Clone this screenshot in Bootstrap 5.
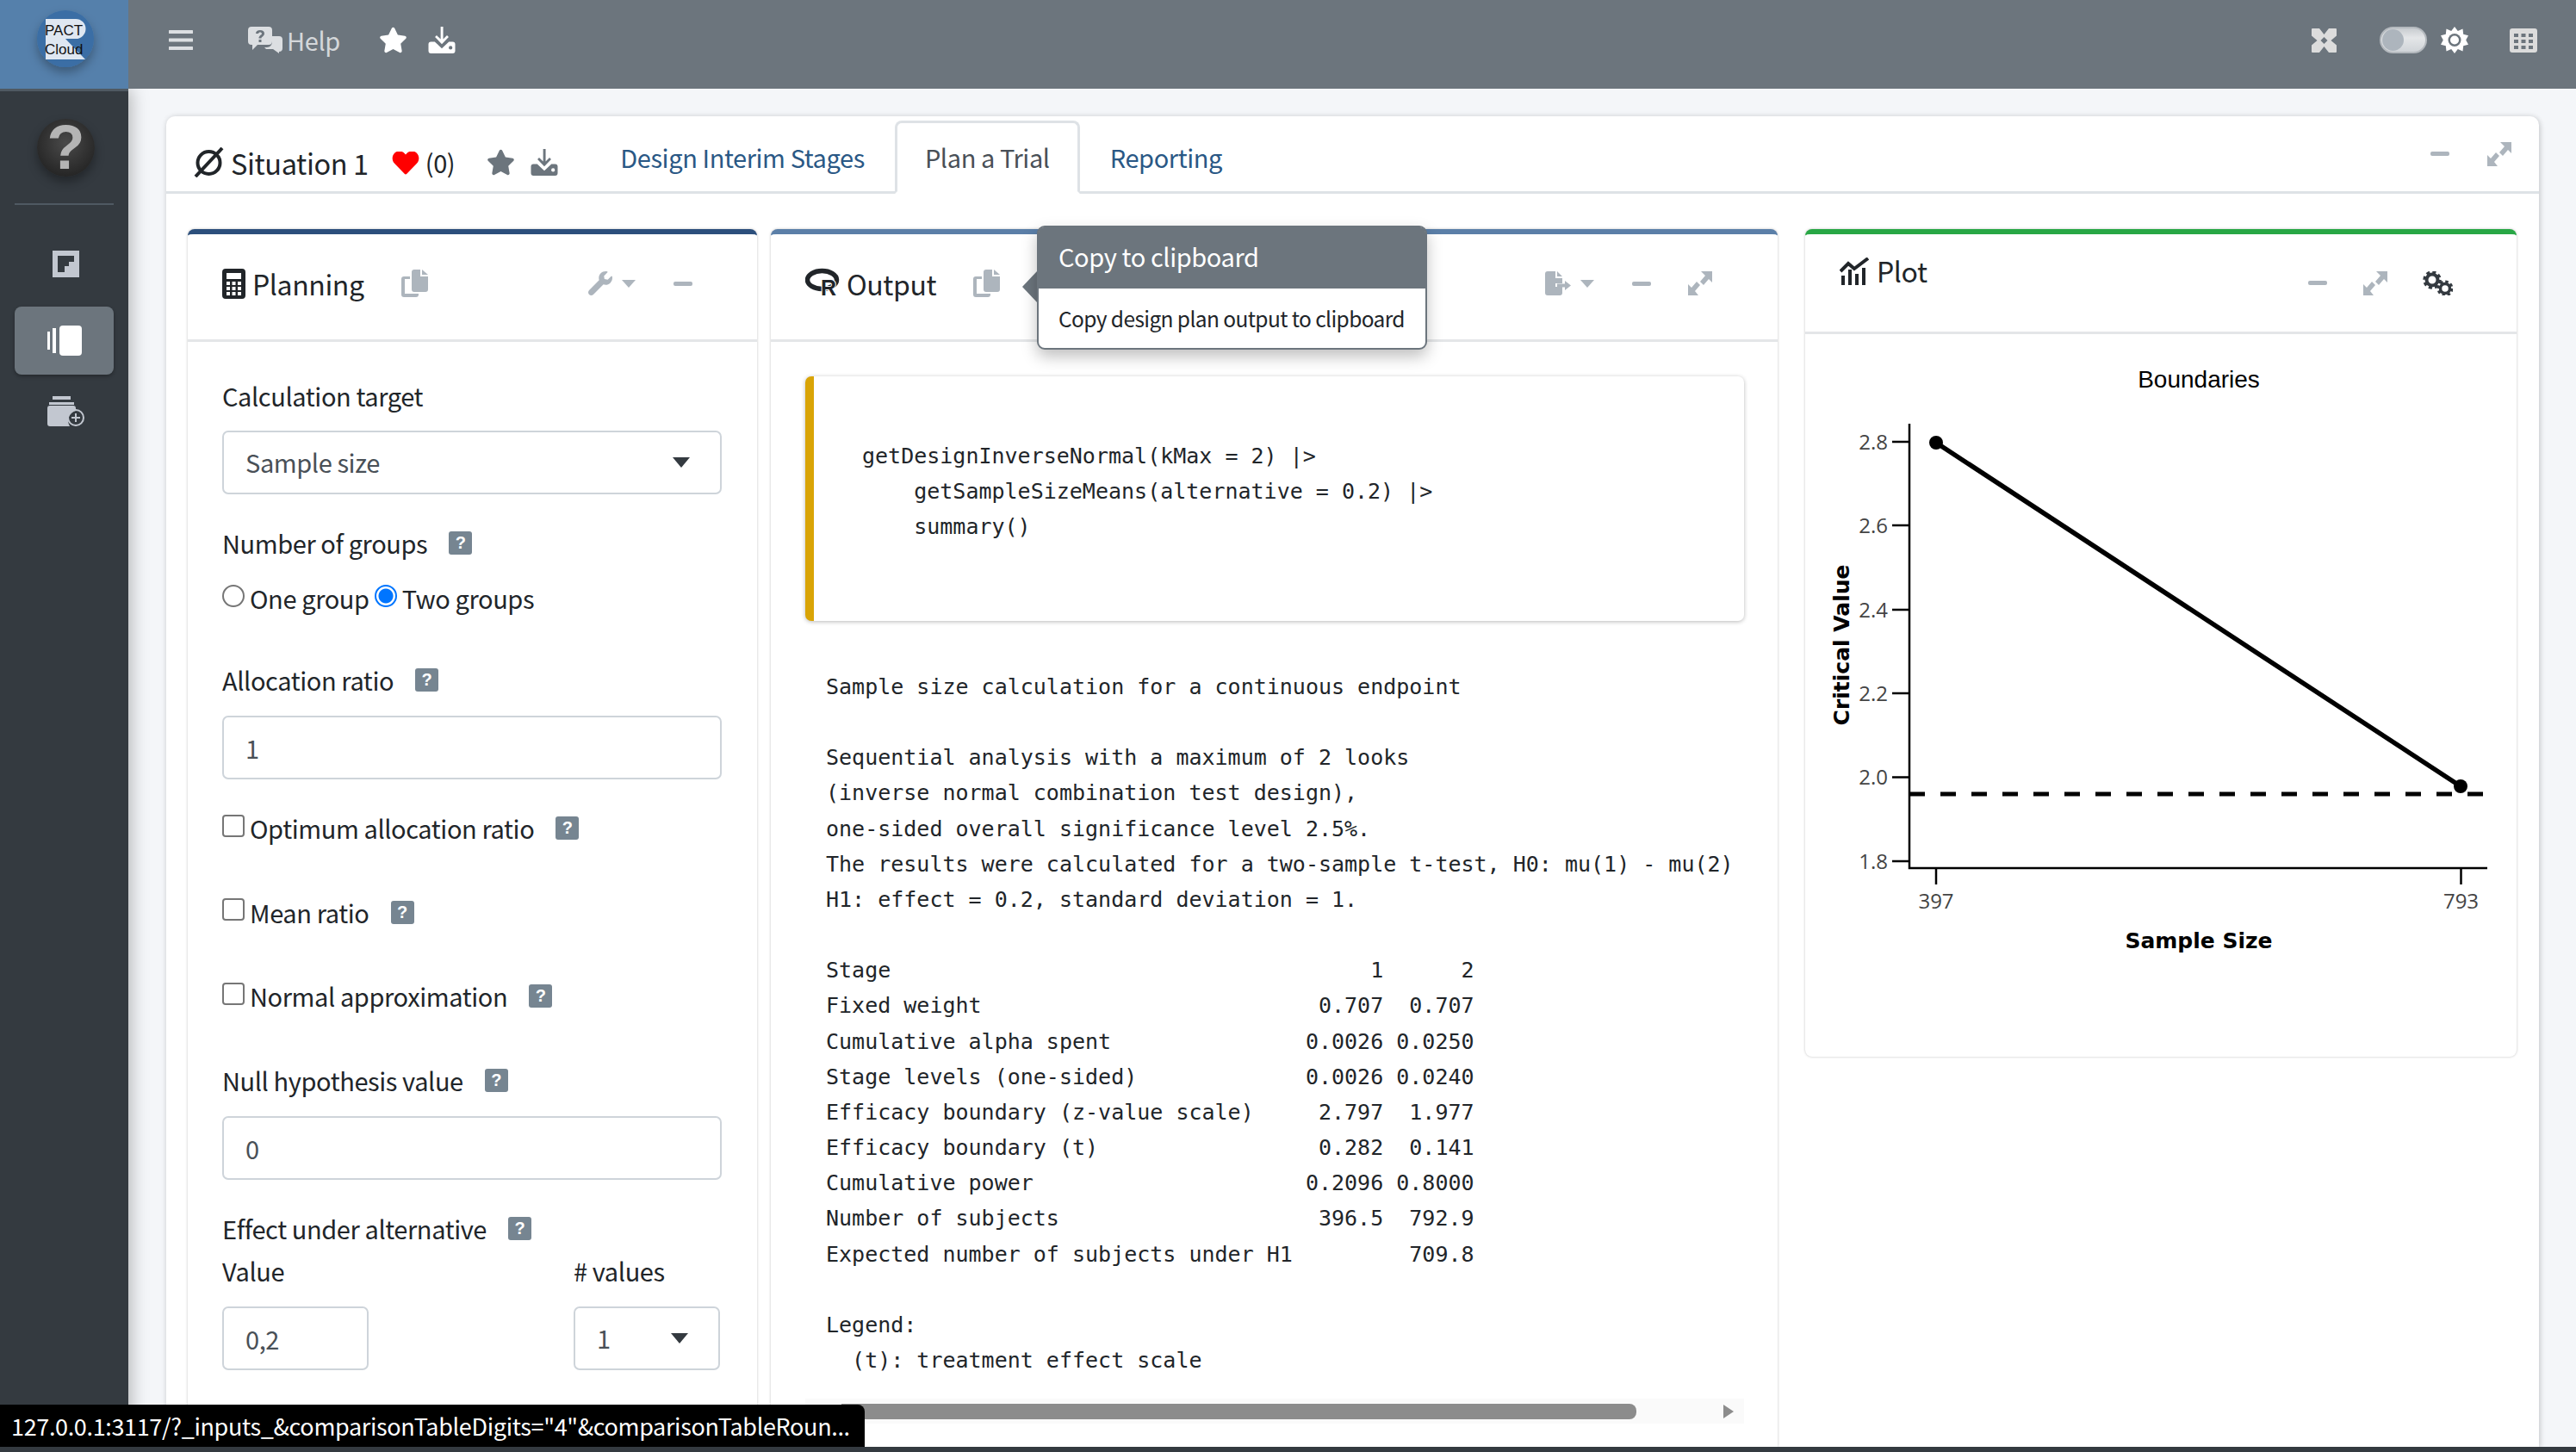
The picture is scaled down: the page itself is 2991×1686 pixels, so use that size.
<!DOCTYPE html>
<html lang="en">
<head>
<meta charset="utf-8">
<title>Situation 1</title>
<link rel="stylesheet" href="https://cdn.jsdelivr.net/npm/bootstrap@5.3.0/dist/css/bootstrap.min.css">
<style>
html,body{height:100%}
body{font-family:"Noto Sans CJK SC","Open Sans",sans-serif;font-size:29px;letter-spacing:-.4px;line-height:45px;color:#212529;background:#f4f6f9;position:relative;overflow:hidden}
.topstrip{height:103px;background:#6c757d;flex:none}
.logo-cell{width:149px;background:#5580ab;flex:none}
.lift{height:100%;padding-bottom:10px}
.top-ico{color:#dcdfe2;display:block}
.top-white{color:#fff;display:block}
.help-word{color:#d4d7da;font-size:29px;margin-left:5px}
.hamb{margin-left:47px;margin-right:64px}
.top-star{margin-left:45px;margin-right:24px}
.top-exp{margin-right:50px}
.top-tog{margin-right:16px}
.top-sun{margin-right:48px}
.endpad{width:45px}
.togpill{width:55px;height:31px;border-radius:16px;background:linear-gradient(#c8ccd0,#e4e6e8 40%,#d0d4d8);border:2px solid #b4b9be;position:relative;display:block}
.togpill i{position:absolute;left:1px;top:1px;width:25px;height:25px;border-radius:50%;background:#adb5bd}
.sidecol{width:149px;background:#343a40;flex:none;box-shadow:4px 0 18px rgba(0,0,0,.25);z-index:2;border-top:3px solid #4f5962}
.side-ball{width:67px;height:67px;border-radius:50%;margin:32px auto 0 43px;background:radial-gradient(circle at 50% 42%,#4a4a4a,#1c1c1c 95%);color:#b4b4b4;font:700 72px/67px "Liberation Sans",sans-serif;letter-spacing:0;text-align:center;box-shadow:0 6px 12px rgba(0,0,0,.35);flex:none}
.side-rule{height:2px;background:#4f5962;margin:31px 17px 53px}
.side-act{margin:34px 17px 25px;height:79px;background:#6c757d;border-radius:8px;box-shadow:0 2px 4px rgba(0,0,0,.3)}
.side-first{margin-left:61px;display:block}
.side-third{margin-left:55px;display:block}
.contentzone{padding:32px 43px 0 44px;min-width:0}
.maincard{border:0;border-radius:10px 10px 0 0;box-shadow:0 0 6px rgba(0,0,0,.12),2px 2px 6px rgba(0,0,0,.1);overflow:hidden;height:100%}
.mainhead{height:90px;border-bottom:3px solid #dee2e6;flex:none;padding:19px 32px 0}
.main-ctl{margin-top:-19px}
.sit-title{font-size:32.5px;margin-left:8px;margin-right:27px}
.sit-heart{margin-top:2px}
.sit-count{font-size:29px;margin-left:7px;margin-right:37px;color:#212529}
.grey-ico{color:#6c757d;display:block}
.dl-gap{margin-left:18px;margin-right:37px}
.pagetabs{border:0;gap:0;align-self:flex-end;margin-bottom:-3px}
.pagetabs .nav-link{font-size:29px;line-height:45px;padding:17px 32px 18px;color:#2a5885;border:3px solid transparent;border-radius:8px 8px 0 0;margin:0;height:85px}
.pagetabs .nav-link.active{color:#495057;border-color:#dee2e6 #dee2e6 #fff;background:#fff}
.tab-first{margin-left:-32px}
.mute{color:#adb5bd;display:block}
.main-min{margin-right:44px}
.mainbody{padding:41px 26px 0 25px;gap:0;min-height:0}
.pane{border:0;border-radius:8px 8px 0 0;border-top:6px solid #2c4f7c;box-shadow:0 0 3px rgba(0,0,0,.25);overflow:hidden;background:#fff;flex:none}
.pane-plan{width:661px;margin-right:16px}
.pane-out{width:1169px;margin-right:32px;border-top-color:#5b7fa8}
.pane-plot{width:826px;height:961px;border-top-color:#28a745;border-radius:8px;align-self:flex-start}
.panehead{height:125px;border-bottom:3px solid #e4e6e8;flex:none;padding:0 75px 8px 40px;background:#fff}
.panehead-plot{height:116px;padding:0 74px 0 40px}
.panetitle{font-size:32px;margin-left:8px}
.copy-plan{margin-left:43px}
.copy-out{margin-left:43px}
.caret-ico{margin-left:11px}
.gap-min{margin-left:44px}
.gap-exp{margin-left:42px}
.gap-gear{margin-left:41px}
.plot-title{align-self:flex-start;margin-top:20px}
.planbody{padding:40px 41px 0 40px;overflow:hidden}
.fldlab{line-height:45px;margin-bottom:19px;display:flex;align-items:center}
.fldlab-tight{margin-bottom:4px}
.fldlab-first{margin-bottom:18px}
.q-tag{display:inline-flex;width:27px;height:27px;border-radius:3px;background:#768591;color:#fff;font:700 20px/27px "Liberation Sans",sans-serif;letter-spacing:0;align-items:center;justify-content:center;margin-left:25px}
.plan-ctl{height:74px;border:2px solid #ced4da;border-radius:7px;font-size:29px;letter-spacing:-.4px;color:#495057;padding:0 25px;box-shadow:none}
.form-select.plan-ctl{background-image:none;position:relative;display:flex;align-items:center}
.tri-down{position:absolute;right:35px;top:50%;margin-top:-6px;width:0;height:0;border-left:10px solid transparent;border-right:10px solid transparent;border-top:12px solid #343a40}
.ctl-gap{margin-bottom:34px}
.radrow{height:45px;margin-bottom:50px}
.optpair{display:inline-flex;align-items:center}
.opt-box{width:26px;height:26px;margin:-6px 6px 0 0;border:2px solid #767676;flex:none}
.form-check-input:checked.opt-box{background-color:#fff;border-color:#0075ff;background-image:radial-gradient(circle,#0075ff 0 8px,transparent 9px)}
.pair-two{margin-left:6px}
.chk-row{height:45px;margin-bottom:52.7px;display:flex;align-items:center}
.chk-row .opt-box{border-radius:4px;margin-top:-6px}
.val-col{width:170px;margin-right:238px;flex:none}
.val-col2{width:170px;flex:none}
.val-wrap{gap:0}
.val-col .fldlab,.val-col2 .fldlab{margin-bottom:19px}
.outbody{min-height:0}
.snip{margin:40px 39px 0 40px;height:284px;border-left:10px solid #d9a406;border-radius:7px;background:#fff;box-shadow:0 1px 5px rgba(0,0,0,.28);padding:72px 0 0 56px;flex:none}
.monotxt{font-family:"DejaVu Sans Mono","Liberation Mono",monospace;font-size:25px;letter-spacing:0;line-height:41.15px;margin:0;color:#212529;white-space:pre;overflow:hidden;font-variant-ligatures:none}
.printout{margin:56px 8px 0 64px;flex:1 1 auto;min-height:0}
.hscroll{height:29px;margin:0 39px 27px 40px;background:#fafafa;flex:none;position:relative;display:flex;align-items:center}
.hthumb{height:18px;width:923px;margin-left:42px;background:#8c8c8c;border-radius:0 8px 8px 0}
.harrow{margin-left:auto;margin-right:12px;width:0;height:0;border-top:8px solid transparent;border-bottom:8px solid transparent;border-left:12px solid #8c8c8c}
.plotbox{display:block;width:826px;height:838px}
.pop-tip{position:absolute;left:1204px;top:262px;width:453px;max-width:453px;height:144px;margin:0;border:2px solid #6c757d;border-radius:9px;box-shadow:0 8px 18px rgba(0,0,0,.25);font-family:inherit;letter-spacing:-.4px;z-index:5;display:block;--bs-popover-arrow-width:0}
.pop-tip .popover-header{background:#6c757d;color:#fff;font-size:29px;line-height:45px;height:71px;padding:11px 23px;border:0;border-radius:6px 6px 0 0;font-weight:400}
.pop-tip .popover-body{font-size:24.5px;letter-spacing:-.6px;line-height:38px;padding:16px 23px;color:#212529;white-space:nowrap}
.pop-notch{position:absolute;left:1187px;top:315px;width:0;height:0;border-top:18px solid transparent;border-bottom:18px solid transparent;border-right:17px solid #6c757d;z-index:5}
.linktip{position:absolute;left:0;bottom:6px;width:1004px;height:49px;background:#000;color:#fff;border-radius:0 8px 0 0;font-size:27px;letter-spacing:-.35px;line-height:49px;padding-left:13px;white-space:nowrap;z-index:6}
.footstrip{height:6px;background:#343a40;flex:none;z-index:3}
</style>
</head>
<body class="d-flex flex-column">
<svg class="d-none" xmlns="http://www.w3.org/2000/svg">
<symbol id="s-star" viewBox="0 0 576 512"><path fill="currentColor" d="M259.3 17.8L194 150.2 47.9 171.5c-26.2 3.8-36.7 36.1-17.7 54.6l105.7 103-25 145.5c-4.5 26.3 23.2 46 46.4 33.7L288 439.6l130.7 68.7c23.2 12.2 50.9-7.4 46.4-33.7l-25-145.5 105.7-103c19-18.5 8.5-50.8-17.7-54.6L382 150.2 316.7 17.8c-11.7-23.6-45.6-23.9-57.4 0z"/></symbol>
<symbol id="s-dl" viewBox="0 0 32 32"><path fill="currentColor" d="M14.6 0h3v15l4.6-4.6 2 2L16 20.8 7.800 12.400l2-2 4.800 4.600z"/><path fill="currentColor" fill-rule="evenodd" d="M3 18h4.500L16 26l8.500-8H29a3 3 0 0 1 3 3v8a3 3 0 0 1-3 3H3a3 3 0 0 1-3-3v-8a3 3 0 0 1 3-3zM26.500 23a2.200 2.200 0 1 0 0 4.400 2.200 2.200 0 0 0 0-4.400z"/></symbol>
<symbol id="s-copy" viewBox="0 0 32 32"><path fill="currentColor" d="M12 3a3 3 0 0 1 3-3h7v8h9v15a3 3 0 0 1-3 3H15a3 3 0 0 1-3-3z"/><path fill="currentColor" d="M24 0l7 6h-7z"/><path fill="currentColor" d="M3 8h7v3H4v17h13v-0h3v1a3 3 0 0 1-3 3H3a3 3 0 0 1-3-3V11a3 3 0 0 1 3-3z"/></symbol>
<symbol id="s-exp" viewBox="0 0 28 28"><path fill="currentColor" d="M15 0h13v13l-4-4-6 7-4-4 6-7zM0 28V15l4 4 6-7 4 4-6 7 4 5z"/></symbol>
<symbol id="s-wrench" viewBox="0 0 512 512"><path fill="currentColor" d="M507.730 109.100c-2.240-9.030-13.540-12.090-20.120-5.510l-74.360 74.360-67.880-11.310-11.310-67.880 74.360-74.360c6.620-6.620 3.430-17.900-5.660-20.160-47.380-11.740-99.550.91-136.580 37.930-39.640 39.640-50.550 97.100-34.050 147.200L18.740 402.760c-24.990 24.990-24.990 65.510 0 90.500 24.990 24.990 65.510 24.990 90.500 0l213.210-213.210c50.120 16.710 107.470 5.680 147.370-34.220 37.070-37.070 49.700-89.320 37.910-136.730z"/></symbol>
<symbol id="s-calc" viewBox="0 0 27 35"><path fill="currentColor" fill-rule="evenodd" d="M4 0h19a4 4 0 0 1 4 4v27a4 4 0 0 1-4 4H4a4 4 0 0 1-4-4V4a4 4 0 0 1 4-4zM5 5v7h17V5zM5 15v4h4v-4zM11.500 15v4h4v-4zM18 15v4h4v-4zM5 21v4h4v-4zM11.500 21v4h4v-4zM18 21v4h4v-4zM5 27v4h4v-4zM11.500 27v4h4v-4zM18 27v4h4v-4z"/></symbol>
<symbol id="s-chart" viewBox="0 0 35 32"><path fill="none" stroke="currentColor" stroke-width="4" d="M1 16l9-9 7 6L33 1"/><path fill="currentColor" d="M2 21h4v11H2zM10 14h4v18h-4zM18 19h4v13h-4zM26 12h4v20h-4z"/></symbol>
<symbol id="s-gears" viewBox="0 0 35 28"><circle cx="11" cy="10" r="6.500" fill="none" stroke="currentColor" stroke-width="4"/><circle cx="11" cy="10" r="9" fill="none" stroke="currentColor" stroke-width="3.500" stroke-dasharray="4 3.070"/><circle cx="26" cy="20" r="5.500" fill="none" stroke="currentColor" stroke-width="3.500"/><circle cx="26" cy="20" r="8" fill="none" stroke="currentColor" stroke-width="3" stroke-dasharray="3.500 2.780"/></symbol>
<symbol id="s-export" viewBox="0 0 30 28"><path fill="currentColor" d="M3 0h9v8h8v6h-8v4h8v7a3 3 0 0 1-3 3H3a3 3 0 0 1-3-3V3a3 3 0 0 1 3-3z"/><path fill="currentColor" d="M14 0l6 6h-6zM14 14.500h9V11l7 5.500-7 5.500v-3.500h-9z"/></symbol>
</svg>

<div class="topstrip d-flex align-items-center text-white">
  <div class="logo-cell h-100 d-flex align-items-center justify-content-center">
    <svg width="149" height="103" viewBox="0 0 149 103"><defs><filter id="lsh" x="-30%" y="-30%" width="160%" height="170%"><feDropShadow dx="0" dy="6" stdDeviation="6" flood-opacity=".3"/></filter></defs><circle cx="76" cy="45" r="33" fill="#3a6ea5" filter="url(#lsh)"/><path fill="#dfe7f1" d="M53 22H88a11.500 11.500 0 0 1 0 23H76L99 69H53z"/><text x="52" y="41" font-family="Liberation Sans" font-size="17" letter-spacing="0" fill="#111">PACT</text><text x="52" y="63" font-family="Liberation Sans" font-size="17" letter-spacing="0" fill="#111">Cloud</text></svg>
  </div>
  <div class="lift d-flex align-items-center">
    <svg class="top-ico hamb" width="28" height="23" viewBox="0 0 28 23"><path fill="currentColor" d="M1 0h26a1.500 1.500 0 0 1 0 4H1a1.500 1.500 0 0 1 0-4zM1 9.500h26a1.500 1.500 0 0 1 0 4H1a1.500 1.500 0 0 1 0-4zM1 19h26a1.500 1.500 0 0 1 0 4H1a1.500 1.500 0 0 1 0-4z"/></svg>
    <svg class="top-ico" width="40" height="31" viewBox="0 0 40 31"><path fill="currentColor" d="M24 11h12a4 4 0 0 1 4 4v10a4 4 0 0 1-4 4v2l-7-5h-8l-2-2h3a6 6 0 0 0 6-6v-7z"/><path fill="currentColor" fill-rule="evenodd" d="M4 0h20a4 4 0 0 1 4 4v13a4 4 0 0 1-4 4H11l-6 6v-6H4a4 4 0 0 1-4-4V4a4 4 0 0 1 4-4zM14 4c-3 0-5 1.500-5 4h3c0-1 1-1.600 2-1.600s2 .6 2 1.600c0 1.800-3.500 2-3.500 5.500h3c0-2 3.500-2.500 3.500-5.500 0-2.500-2-4-5-4zM12.500 15v3h3v-3z"/></svg>
    <span class="help-word">Help</span>
    <svg class="top-white top-star" width="33" height="31"><use href="#s-star"/></svg>
    <svg class="top-white" width="32" height="31"><use href="#s-dl"/></svg>
  </div>
  <div class="lift ms-auto d-flex align-items-center">
    <svg class="top-ico top-exp" width="29" height="28" viewBox="0 0 29 28"><rect width="29" height="28" rx="1" fill="#dcdcdc"/><path fill="#6c757d" d="M9 0h11l-5.500 7zM9 28h11l-5.500-7zM0 8.500v11L6.500 14zM29 8.500v11L22.500 14zM10.500 14l4-4 4 4-4 4z"/></svg>
    <span class="togpill top-tog"><i></i></span>
    <svg class="top-white top-sun" width="32" height="31" viewBox="0 0 32 31"><path fill="#fff" d="M16 0l3.800 5 5.700-2.500.7 6.200 5.800 1.600-2.800 5.200 2.800 5.200-5.800 1.600-.7 6.200-5.700-2.500L16 31l-3.800-5-5.700 2.500-.7-6.200L0 20.700l2.800-5.200L0 10.300l5.800-1.600.7-6.200L12.200 5z"/><circle cx="16" cy="15.500" r="7.500" fill="#6c757d"/><circle cx="16" cy="15.500" r="5" fill="#fff"/></svg>
    <svg class="top-ico" width="32" height="28" viewBox="0 0 32 28"><path fill="#dcdcdc" fill-rule="evenodd" d="M3 0h26a3 3 0 0 1 3 3v22a3 3 0 0 1-3 3H3a3 3 0 0 1-3-3V3a3 3 0 0 1 3-3zM5 6v4h5V6zM13.500 6v4h5V6zM22 6v4h5V6zM5 13v4h5v-4zM13.500 13v4h5v-4zM22 13v4h5v-4zM5 20v4h5v-4zM13.500 20v4h5v-4zM22 20v4h5v-4z"/></svg>
    <span class="d-inline-block endpad"></span>
  </div>
</div>

<div class="d-flex flex-grow-1 overflow-hidden">
  <aside class="sidecol d-flex flex-column">
    <div class="side-ball">?</div>
    <div class="side-rule"></div>
    <svg class="side-first" width="31" height="31" viewBox="0 0 31 31"><path fill="#c2c7d0" fill-rule="evenodd" d="M0 0h31v31H0zM6 6v19h8v-7h5v-5h6V6z"/></svg>
    <div class="side-act d-flex align-items-center justify-content-center">
      <svg width="40" height="35" viewBox="0 0 40 35"><rect x="14" y="0" width="26" height="35" rx="4" fill="#fff"/><rect x="0" y="7" width="3" height="21" fill="#fff"/><rect x="6" y="3" width="4" height="29" fill="#fff"/></svg>
    </div>
    <svg class="side-third" width="43" height="35" viewBox="0 0 43 35"><path fill="#c2c7d0" d="M6 0h21v4H6zM2 7h29v3H2z"/><path fill="#c2c7d0" d="M0 14a3 3 0 0 1 3-3h27a3 3 0 0 1 3 3v3a12 12 0 0 0-7 18H3a3 3 0 0 1-3-3z"/><circle cx="33" cy="25" r="9" fill="none" stroke="#c2c7d0" stroke-width="2"/><path fill="#c2c7d0" d="M32 20h2v4h4v2h-4v4h-2v-4h-4v-2h4z"/></svg>
  </aside>

  <main class="contentzone flex-grow-1">
    <div class="card maincard d-flex flex-column">
      <div class="mainhead d-flex align-items-center">
        <svg width="35" height="35" viewBox="0 0 35 35"><circle cx="17.500" cy="18" r="13" fill="none" stroke="#212529" stroke-width="4"/><path d="M2 34L33 1" stroke="#212529" stroke-width="4"/></svg>
        <span class="sit-title">Situation 1</span>
        <svg class="sit-heart" width="32" height="27" viewBox="0 0 512 450"><path fill="#f00" d="M462.300 22.600C407.500-24.100 326-15.700 275.700 36.200L256 56.500l-19.700-20.300C186.100-15.700 104.500-24.100 49.700 22.600c-62.800 53.600-66.100 149.800-9.900 207.900l193.500 199.800c12.500 12.900 32.800 12.900 45.300 0l193.500-199.800c56.300-58.100 53-154.300-9.800-207.900z"/></svg>
        <span class="sit-count">(0)</span>
        <svg class="grey-ico" width="33" height="31"><use href="#s-star"/></svg>
        <svg class="grey-ico dl-gap" width="32" height="31"><use href="#s-dl"/></svg>
        <ul class="nav nav-tabs pagetabs">
          <li class="nav-item"><a class="nav-link tab-first" href="#">Design Interim Stages</a></li>
          <li class="nav-item"><a class="nav-link active" href="#">Plan a Trial</a></li>
          <li class="nav-item"><a class="nav-link" href="#">Reporting</a></li>
        </ul>
        <div class="ms-auto main-ctl d-flex align-items-center">
          <svg class="mute main-min" width="22" height="5"><rect width="22" height="5" rx="2" fill="currentColor"/></svg>
          <svg class="mute" width="28" height="28"><use href="#s-exp"/></svg>
        </div>
      </div>
      <div class="mainbody d-flex flex-grow-1">
        <section class="pane pane-plan d-flex flex-column">
          <div class="panehead d-flex align-items-center">
            <svg width="27" height="35"><use href="#s-calc"/></svg>
            <span class="panetitle">Planning</span>
            <svg class="mute copy-plan" width="32" height="32"><use href="#s-copy"/></svg>
            <div class="ms-auto d-flex align-items-center">
              <svg class="mute" width="28" height="28"><use href="#s-wrench"/></svg>
              <svg class="mute caret-ico" width="16" height="9" viewBox="0 0 16 9"><path fill="currentColor" d="M0 0h16L8 9z"/></svg>
              <svg class="mute gap-min" width="22" height="5"><rect width="22" height="5" rx="2" fill="currentColor"/></svg>
            </div>
          </div>
          <form class="planbody flex-grow-1">
            <div class="fldlab fldlab-first">Calculation target</div>
            <div class="form-select plan-ctl ctl-gap">Sample size<span class="tri-down"></span></div>
            <div class="fldlab">Number of groups <span class="q-tag">?</span></div>
            <div class="radrow d-flex align-items-center">
              <span class="optpair"><input class="form-check-input opt-box" type="radio" name="grp" aria-label="One group">One group</span>
              <span class="optpair pair-two"><input class="form-check-input opt-box" type="radio" name="grp" checked aria-label="Two groups">Two groups</span>
            </div>
            <div class="fldlab">Allocation ratio <span class="q-tag">?</span></div>
            <input class="form-control plan-ctl ctl-gap" value="1" aria-label="Allocation ratio">
            <div class="chk-row"><input class="form-check-input opt-box" type="checkbox" aria-label="Optimum allocation ratio">Optimum allocation ratio <span class="q-tag">?</span></div>
            <div class="chk-row"><input class="form-check-input opt-box" type="checkbox" aria-label="Mean ratio">Mean ratio <span class="q-tag">?</span></div>
            <div class="chk-row"><input class="form-check-input opt-box" type="checkbox" aria-label="Normal approximation">Normal approximation <span class="q-tag">?</span></div>
            <div class="fldlab">Null hypothesis value <span class="q-tag">?</span></div>
            <input class="form-control plan-ctl ctl-gap" value="0" aria-label="Null hypothesis value">
            <div class="fldlab fldlab-tight">Effect under alternative <span class="q-tag">?</span></div>
            <div class="d-flex val-wrap">
              <div class="val-col"><div class="fldlab">Value</div><input class="form-control plan-ctl" value="0,2" aria-label="Value"></div>
              <div class="val-col2"><div class="fldlab"># values</div><div class="form-select plan-ctl">1<span class="tri-down"></span></div></div>
            </div>
          </form>
        </section>

        <section class="pane pane-out d-flex flex-column">
          <div class="panehead d-flex align-items-center">
            <svg width="40" height="40" viewBox="0 -4 40 40"><ellipse cx="19.500" cy="12" rx="17" ry="10.500" fill="none" stroke="#212529" stroke-width="5.500"/><text x="18" y="30" font-family="Liberation Sans" font-weight="700" font-size="25" letter-spacing="0" fill="#212529" stroke="#fff" stroke-width="2" paint-order="stroke">R</text></svg>
            <span class="panetitle">Output</span>
            <svg class="mute copy-out" width="32" height="32"><use href="#s-copy"/></svg>
            <div class="ms-auto d-flex align-items-center">
              <svg class="mute" width="30" height="28"><use href="#s-export"/></svg>
              <svg class="mute caret-ico" width="16" height="9" viewBox="0 0 16 9"><path fill="currentColor" d="M0 0h16L8 9z"/></svg>
              <svg class="mute gap-min" width="22" height="5"><rect width="22" height="5" rx="2" fill="currentColor"/></svg>
              <svg class="mute gap-exp" width="30" height="28"><use href="#s-exp"/></svg>
            </div>
          </div>
          <div class="outbody d-flex flex-column flex-grow-1">
            <div class="snip"><pre class="monotxt">getDesignInverseNormal(kMax = 2) |&gt;
    getSampleSizeMeans(alternative = 0.2) |&gt;
    summary()</pre></div>
            <pre class="monotxt printout">Sample size calculation for a continuous endpoint

Sequential analysis with a maximum of 2 looks
(inverse normal combination test design),
one-sided overall significance level 2.5%.
The results were calculated for a two-sample t-test, H0: mu(1) - mu(2)
H1: effect = 0.2, standard deviation = 1.

Stage                                     1      2
Fixed weight                          0.707  0.707
Cumulative alpha spent               0.0026 0.0250
Stage levels (one-sided)             0.0026 0.0240
Efficacy boundary (z-value scale)     2.797  1.977
Efficacy boundary (t)                 0.282  0.141
Cumulative power                     0.2096 0.8000
Number of subjects                    396.5  792.9
Expected number of subjects under H1         709.8

Legend:
  (t): treatment effect scale</pre>
            <div class="hscroll"><div class="hthumb"></div><div class="harrow"></div></div>
          </div>
        </section>

        <section class="pane pane-plot d-flex flex-column">
          <div class="panehead panehead-plot d-flex align-items-center">
            <div class="d-flex align-items-center plot-title">
              <svg width="35" height="32"><use href="#s-chart"/></svg>
              <span class="panetitle">Plot</span>
            </div>
            <div class="ms-auto d-flex align-items-center">
              <svg class="mute" width="22" height="5"><rect width="22" height="5" rx="2" fill="currentColor"/></svg>
              <svg class="mute gap-exp" width="28" height="28"><use href="#s-exp"/></svg>
              <svg class="gap-gear" width="35" height="28" color="#343a40"><use href="#s-gears"/></svg>
            </div>
          </div>
          <svg class="plotbox" viewBox="2096 389 826 838" xmlns="http://www.w3.org/2000/svg">
            <text x="2553" y="451" text-anchor="middle" font-family="Liberation Sans" font-size="28" letter-spacing="0" fill="#000">Boundaries</text>
            <g stroke="#000" stroke-width="2.500" fill="none">
              <path d="M2217 493V1009H2888"/>
              <path d="M2197 514H2217M2197 611H2217M2197 709H2217M2197 806H2217M2197 903.500H2217M2197 1001H2217M2248 1009V1028M2857.500 1009V1028"/>
            </g>
            <g font-family="Open Sans" font-size="24" letter-spacing="0" fill="#444" text-anchor="end">
              <text x="2192" y="523">2.8</text><text x="2192" y="620">2.6</text><text x="2192" y="718">2.4</text><text x="2192" y="815">2.2</text><text x="2192" y="912">2.0</text><text x="2192" y="1010">1.8</text>
            </g>
            <g font-family="Open Sans" font-size="24" letter-spacing="0" fill="#444" text-anchor="middle">
              <text x="2248" y="1056">397</text><text x="2857.500" y="1056">793</text>
            </g>
            <path d="M2248 515L2857 914" stroke="#000" stroke-width="5.500"/>
            <path d="M2217 923H2885" stroke="#000" stroke-width="5" stroke-dasharray="18 18"/>
            <circle cx="2248" cy="515" r="8" fill="#000"/><circle cx="2857" cy="914" r="8" fill="#000"/>
            <text x="2553" y="1102" text-anchor="middle" font-family="DejaVu Sans" font-weight="700" font-size="25" letter-spacing="0" fill="#000">Sample Size</text>
            <text transform="translate(2147 750) rotate(-90)" text-anchor="middle" font-family="DejaVu Sans" font-weight="700" font-size="25" letter-spacing="0" fill="#000">Critical Value</text>
          </svg>
        </section>
      </div>
    </div>
  </main>
</div>
<div class="footstrip"></div>

<div class="pop-notch"></div>
<div class="popover pop-tip" role="tooltip">
  <h3 class="popover-header">Copy to clipboard</h3>
  <div class="popover-body">Copy design plan output to clipboard</div>
</div>
<div class="linktip">127.0.0.1:3117/?_inputs_&amp;comparisonTableDigits="4"&amp;comparisonTableRoun...</div>
<script src="https://cdn.jsdelivr.net/npm/bootstrap@5.3.0/dist/js/bootstrap.bundle.min.js"></script>
</body>
</html>
